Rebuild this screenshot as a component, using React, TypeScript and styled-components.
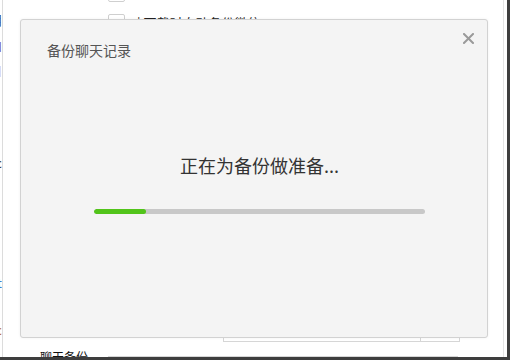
import styled, { createGlobalStyle } from "styled-components";

const GlobalStyle = createGlobalStyle`
  html, body {
    margin: 0;
    padding: 0;
    background: #ffffff;
  }
  body {
    font-family: "Noto Sans CJK SC", "Noto Sans", sans-serif;
  }
`;

const sideItems = [
  { text: "用", color: "#222", gap: 12 },
  { text: "山", color: "#6b4fa0", gap: 9 },
  { text: "白", color: "#b5652a", gap: 9 },
  { text: "c", color: "#333", gap: 77 },
  { text: "t", color: "#3b7fd0", gap: 104 },
  { text: "c", color: "#b5652a", gap: 31 },
];

function App() {
  const progress = 52 / 330;

  return (
    <>
      <GlobalStyle />
      <Screen>
        <Window>
          <Sidebar>
            {sideItems.map((item, i) => (
              <SideItem key={i} $gap={item.gap} color={item.color}>
                {item.text}
              </SideItem>
            ))}
          </Sidebar>
          <Content>
            <OptionList>
              <Option>
                <Checkbox />
              </Option>
              <Option>
                <Checkbox />
                <OptionLabel>| 下载时自动备份微信</OptionLabel>
              </Option>
            </OptionList>
            <PathBox>
              <PathInput />
              <PathButton />
            </PathBox>
            <BottomRow>
              <BottomLabel>聊天备份</BottomLabel>
              <BottomField />
            </BottomRow>
          </Content>
        </Window>

        <Dialog>
          <CloseButton aria-label="close">
            <svg width="11" height="11" viewBox="0 0 11 11">
              <path
                d="M1 1 L10 10 M10 1 L1 10"
                stroke="#9a9a9a"
                strokeWidth="2"
                strokeLinecap="square"
              />
            </svg>
          </CloseButton>
          <Title>备份聊天记录</Title>
          <Body>
            <Message>正在为备份做准备...</Message>
            <Track>
              <Fill style={{ width: `${progress * 100}%` }} />
            </Track>
          </Body>
        </Dialog>
      </Screen>
    </>
  );
}

// STYLED COMPONENTS
const Screen = styled.div`
  position: relative;
  width: 512px;
  height: 362px;
  overflow: hidden;
  background: #ffffff;
`;

const Window = styled.div`
  display: flex;
  width: 507px;
  height: 357px;
  overflow: hidden;
  background: #ffffff;
  border-right: 3px solid #3e3e3e;
  border-bottom: 3px solid #3e3e3e;
`;

const Sidebar = styled.div`
  display: flex;
  flex-direction: column;
  width: 2px;
  overflow: hidden;
  border-right: 1px solid #dcdcdc;
  font-size: 13px;
  line-height: 16px;
`;

const SideItem = styled.div<{ $gap: number }>`
  display: flex;
  justify-content: flex-end;
  margin-top: ${(props) => props.$gap}px;
  color: ${(props) => props.color};
  white-space: nowrap;
`;

const Content = styled.div`
  display: flex;
  flex-direction: column;
  flex: 1;
  margin-right: 3px;
  border-right: 1px solid #e4e4e4;
  overflow: hidden;
`;

const OptionList = styled.div`
  display: flex;
  flex-direction: column;
  gap: 13px;
  margin-top: -15px;
  padding-left: 105px;
`;

const Option = styled.div`
  display: flex;
  align-items: center;
  gap: 12px;
  height: 16px;
`;

const Checkbox = styled.span`
  width: 15px;
  height: 15px;
  border: 1px solid #cfcfcf;
  border-radius: 2px;
  background: #ffffff;
`;

const OptionLabel = styled.span`
  font-size: 13px;
  color: #222;
  white-space: nowrap;
`;

const PathBox = styled.div`
  display: flex;
  margin-top: auto;
  margin-left: 220px;
  width: 235px;
  height: 22px;
  border: 1px solid #d6d6d6;
`;

const PathInput = styled.div`
  flex: 1;
  border-right: 1px solid #d6d6d6;
`;

const PathButton = styled.div`
  width: 38px;
`;

const BottomRow = styled.div`
  display: flex;
  align-items: flex-start;
  height: 15px;
  padding-left: 37px;
  gap: 20px;
`;

const BottomLabel = styled.span`
  margin-top: 7px;
  font-size: 12px;
  line-height: 16px;
  color: #111;
  white-space: nowrap;
`;

const BottomField = styled.div`
  margin-top: 14px;
  width: 350px;
  height: 10px;
  border-top: 1px solid #d6d6d6;
`;

const Dialog = styled.div`
  position: absolute;
  left: 20px;
  top: 19px;
  width: 466px;
  height: 317px;
  background: #f4f4f4;
  border: 1px solid #d2d2d2;
  border-radius: 3px;
  box-shadow: 0 0 3px rgba(0, 0, 0, 0.06);
`;

const CloseButton = styled.button`
  position: absolute;
  top: 13px;
  right: 13px;
  display: flex;
  padding: 0;
  border: none;
  background: transparent;
  cursor: pointer;
`;

const Title = styled.div`
  padding: 20px 0 0 26px;
  font-size: 14px;
  line-height: 20px;
  color: #555555;
`;

const Body = styled.div`
  display: flex;
  flex-direction: column;
  align-items: center;
  padding: 0 62px 0 73px;
`;

const Message = styled.div`
  margin-top: 93px;
  font-size: 18px;
  line-height: 24px;
  color: #333333;
`;

const Track = styled.div`
  width: 100%;
  height: 5px;
  margin-top: 32px;
  border-radius: 3px;
  background: #c8c8c8;
  overflow: hidden;
`;

const Fill = styled.div`
  height: 100%;
  border-radius: 3px;
  background: #52c41a;
`;

export default App;
